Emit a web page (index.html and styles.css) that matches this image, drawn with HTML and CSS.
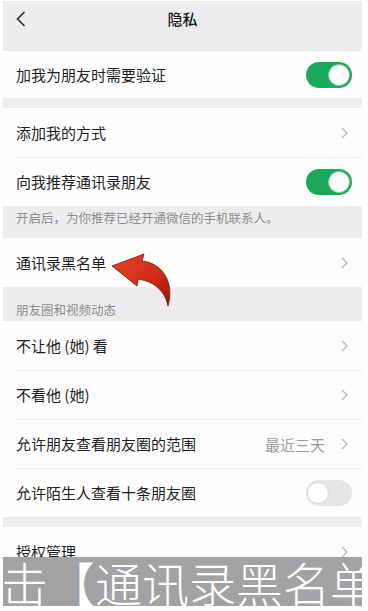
FILE: index.html
```html
<!DOCTYPE html>
<html lang="zh-CN">
<head>
<meta charset="utf-8">
<title>隐私</title>
<link rel="stylesheet" href="styles.css">
</head>
<body>
<div class="screen">
  <header class="nav">
    <svg class="back" width="10" height="16" viewBox="0 0 10 16"><polyline points="8.5,1 1.5,8 8.5,15" fill="none" stroke="#222" stroke-width="1.5"/></svg>
    <h1 class="title">隐私</h1>
  </header>

  <div class="group">
    <div class="row first"><span class="label">加我为朋友时需要验证</span><span class="switch on"><span class="knob"></span></span></div>
  </div>
  <div class="gap"></div>
  <div class="group">
    <div class="row"><span class="label">添加我的方式</span><svg class="chev" width="7" height="12" viewBox="0 0 7 12"><polyline points="1,1 6,6 1,11" fill="none" stroke="#b8b8b8" stroke-width="1.3"/></svg></div>
    <div class="row"><span class="label">向我推荐通讯录朋友</span><span class="switch on"><span class="knob"></span></span></div>
  </div>
  <div class="note">开启后，为你推荐已经开通微信的手机联系人。</div>
  <div class="group">
    <div class="row"><span class="label">通讯录黑名单</span><svg class="chev" width="7" height="12" viewBox="0 0 7 12"><polyline points="1,1 6,6 1,11" fill="none" stroke="#b8b8b8" stroke-width="1.3"/></svg></div>
  </div>
  <div class="section-title">朋友圈和视频动态</div>
  <div class="group">
    <div class="row"><span class="label">不让他 (她) 看</span><svg class="chev" width="7" height="12" viewBox="0 0 7 12"><polyline points="1,1 6,6 1,11" fill="none" stroke="#b8b8b8" stroke-width="1.3"/></svg></div>
    <div class="row"><span class="label">不看他 (她)</span><svg class="chev" width="7" height="12" viewBox="0 0 7 12"><polyline points="1,1 6,6 1,11" fill="none" stroke="#b8b8b8" stroke-width="1.3"/></svg></div>
    <div class="row"><span class="label">允许朋友查看朋友圈的范围</span><span class="value">最近三天</span><svg class="chev" width="7" height="12" viewBox="0 0 7 12"><polyline points="1,1 6,6 1,11" fill="none" stroke="#b8b8b8" stroke-width="1.3"/></svg></div>
    <div class="row"><span class="label">允许陌生人查看十条朋友圈</span><span class="switch off"><span class="knob"></span></span></div>
  </div>
  <div class="gap"></div>
  <div class="group">
    <div class="row"><span class="label">授权管理</span><svg class="chev" width="7" height="12" viewBox="0 0 7 12"><polyline points="1,1 6,6 1,11" fill="none" stroke="#b8b8b8" stroke-width="1.3"/></svg></div>
  </div>
</div>

<svg class="arrow" width="70" height="64" viewBox="108 248 70 64">
  <defs>
    <linearGradient id="ag" x1="0" y1="0" x2="1" y2="1">
      <stop offset="0" stop-color="#e8452c"/>
      <stop offset="0.6" stop-color="#cf2a16"/>
      <stop offset="1" stop-color="#8e1409"/>
    </linearGradient>
  </defs>
  <path d="M112,266 L144,254 L142,261 C162,263 175,282 168,306 C165,292 156,282 138,279 L137,286 Z" fill="url(#ag)" stroke="#7a140a" stroke-width="0.8" stroke-linejoin="round"/>
</svg>

<div class="banner">击<span class="bracket">【</span>通讯录黑名单</div>
</body>
</html>
```

FILE: styles.css
```css
* { box-sizing: border-box; }
html, body {
  margin: 0;
  padding: 0;
  background: #ffffff;
  width: 368px;
  height: 611px;
  overflow: hidden;
}
body {
  position: relative;
  font-family: "Noto Sans CJK SC", "Noto Sans", sans-serif;
  color: #1e1e1e;
}
.screen {
  margin: 1px 0 0 3px;
  width: 359px;
  background: #edecee;
}
.nav {
  position: relative;
  height: 50px;
  display: flex;
  justify-content: center;
  align-items: flex-start;
  padding-top: 7px;
  background: #edecee;
}
.back {
  position: absolute;
  left: 13px;
  top: 10px;
}
.title {
  margin: 0;
  font-size: 15px;
  font-weight: 500;
  line-height: 22px;
  color: #1a1a1a;
}
.group {
  background: #fefefe;
}
.row {
  margin-left: 13px;
  padding-right: 10px;
  height: 49px;
  display: flex;
  align-items: center;
  border-top: 1px solid #efefef;
}
.row:first-child { border-top: none; }
.row.first { height: 47px; }
.label {
  flex: 1;
  font-size: 15px;
  line-height: 20px;
  color: #1e1e1e;
}
.value {
  font-size: 15px;
  color: #9b9b9b;
  margin-right: 16px;
}
.chev {
  margin-right: 4px;
}
.switch {
  position: relative;
  width: 46px;
  height: 26px;
  border-radius: 13px;
}
.switch.on {
  background: #1aa95a;
}
.switch.off {
  background: #e6e5e6;
}
.knob {
  position: absolute;
  top: 2px;
  width: 22px;
  height: 22px;
  border-radius: 50%;
  background: #fff;
}
.switch.on .knob {
  right: 2px;
  border: 1px solid #7fcf9f;
}
.switch.off .knob {
  left: 1px;
  border: 1px solid #dcdcdc;
}
.gap {
  height: 10px;
  background: #edecee;
}
.note {
  height: 32px;
  padding: 3px 0 0 13px;
  font-size: 12.5px;
  line-height: 18px;
  color: #8c8c8c;
  background: #edecee;
}
.section-title {
  height: 34px;
  padding: 14px 0 0 13px;
  font-size: 12.5px;
  line-height: 18px;
  color: #8c8c8c;
  background: #edecee;
}
.arrow {
  position: absolute;
  left: 108px;
  top: 248px;
}
.banner {
  position: absolute;
  left: 3px;
  top: 557px;
  width: 359px;
  height: 49px;
  background: #a3a2a4;
  color: #ffffff;
  font-size: 47px;
  line-height: 50px;
  text-indent: -2px;
  white-space: nowrap;
  overflow: hidden;
  font-family: "Noto Sans CJK SC", sans-serif;
  font-weight: 300;
}
.bracket {
  font-family: "Noto Sans CJK TC", sans-serif;
}
```
